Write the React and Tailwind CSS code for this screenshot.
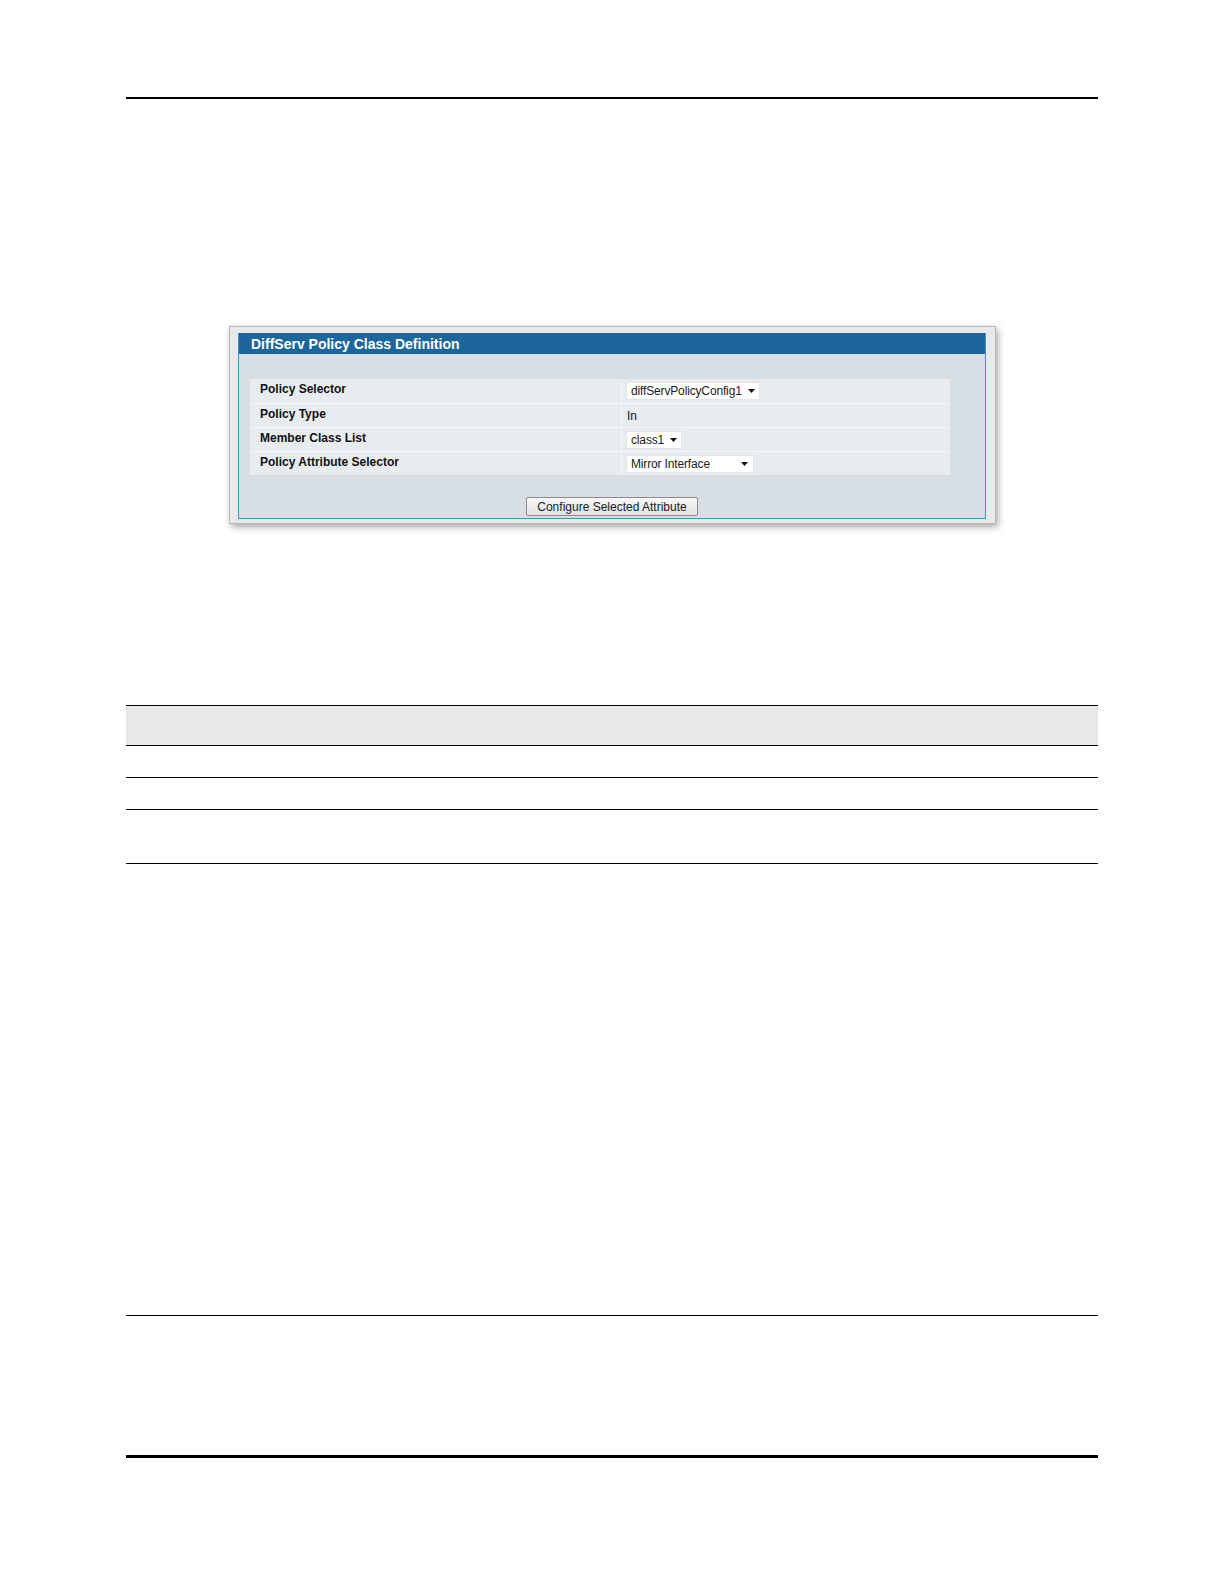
import React from "react";

function Arrow() {
  return (
    <svg width="7" height="4" viewBox="0 0 7 4" className="shrink-0">
      <polygon points="0,0 7,0 3.5,4" fill="#111" />
    </svg>
  );
}

function Select({ value, width }) {
  return (
    <div
      className="flex h-[18px] items-center justify-between gap-[6px] bg-white border border-[#e2e4e6] pl-[4px] pr-[5px] text-[12px] tracking-[-0.15px] leading-none text-[#1a1a1a]"
      style={{ width }}
    >
      <span className="whitespace-nowrap">{value}</span>
      <Arrow />
    </div>
  );
}

function Row({ label, children, first }) {
  return (
    <div
      className={
        "flex h-[24px] bg-[#e9ecef] " +
        (first ? "" : "border-t border-[#f6f7f8]")
      }
    >
      <div className="w-[371px] shrink-0 pl-[10px] pt-[3px] text-[12px] font-bold text-[#111] leading-[14px]">
        {label}
      </div>
      <div className="flex flex-1 items-center border-l border-[#f3f4f5] pl-[4px]">
        {children}
      </div>
    </div>
  );
}

export default function App() {
  return (
    <div
      className="w-[1224px] h-[1584px] bg-white overflow-hidden"
      style={{ fontFamily: '"Liberation Sans", Arial, sans-serif' }}
    >
      <div className="pt-[97px]">
        <div className="mx-[126px] h-[2px] bg-black" />
      </div>

      {/* Screenshot panel */}
      <div className="mt-[227px] ml-[229px] w-[767px] h-[198px] border border-[#b6babe] bg-[#e7e9eb] pt-[6px] pl-[8px] pr-[9px] shadow-[2px_3px_7px_rgba(0,0,0,0.35)]">
        <div className="w-[748px] h-[186px] flex flex-col border-x border-b border-[#3d97bd] bg-[#d7dee4]">
          <div className="h-[21px] bg-[#1c669c] pl-[12px] flex items-center text-[14px] font-bold text-white leading-none">
            DiffServ Policy Class Definition
          </div>
          <div className="pt-[25px] pl-[11px] pr-[35px]">
            <Row label="Policy Selector" first>
              <Select value="diffServPolicyConfig1" width={134} />
            </Row>
            <Row label="Policy Type">
              <span className="pl-[1px] text-[12px] text-[#111]">In</span>
            </Row>
            <Row label="Member Class List">
              <Select value="class1" width={56} />
            </Row>
            <Row label="Policy Attribute Selector">
              <Select value="Mirror Interface" width={128} />
            </Row>
          </div>
          <div className="flex justify-center pt-[22px]">
            <button className="h-[19px] w-[172px] border border-[#8c8c8c] rounded-[2px] bg-gradient-to-b from-[#f8f8f8] to-[#e2e2e2] text-[12px] leading-none text-[#222]">
              Configure Selected Attribute
            </button>
          </div>
        </div>
      </div>

      {/* Table */}
      <div className="mt-[181px] mx-[126px]">
        <div className="h-[1px] bg-black" />
        <div className="h-[39px] bg-[#e8e8e8]" />
        <div className="h-[1px] bg-black" />
        <div className="h-[31px]" />
        <div className="h-[1px] bg-black" />
        <div className="h-[31px]" />
        <div className="h-[1px] bg-black" />
        <div className="h-[53px]" />
        <div className="h-[1px] bg-black" />
      </div>

      <div className="mt-[451px] mx-[126px] h-[1px] bg-black" />
      <div className="mt-[139px] mx-[126px] h-[3px] bg-black" />
    </div>
  );
}
